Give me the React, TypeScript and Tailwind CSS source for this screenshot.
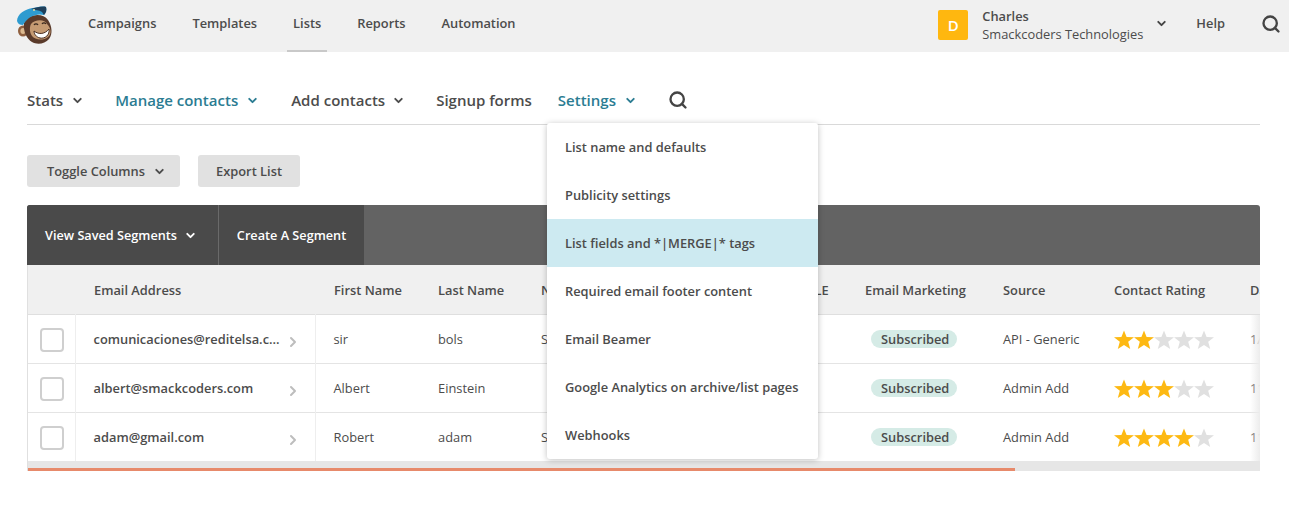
import { ChevronDown, ChevronRight, Search } from "lucide-react";

const navItems = ["Campaigns", "Templates", "Lists", "Reports", "Automation"];

const menuItems = [
  "List name and defaults",
  "Publicity settings",
  "List fields and *|MERGE|* tags",
  "Required email footer content",
  "Email Beamer",
  "Google Analytics on archive/list pages",
  "Webhooks",
];

const contacts = [
  { email: "comunicaciones@reditelsa.c...", first: "sir", last: "bols", company: "Smackcoders", source: "API - Generic", rating: 2, date: "1/12/2018" },
  { email: "albert@smackcoders.com", first: "Albert", last: "Einstein", company: "", source: "Admin Add", rating: 3, date: "11/12/2018" },
  { email: "adam@gmail.com", first: "Robert", last: "adam", company: "Smackcoders", source: "Admin Add", rating: 4, date: "11/12/2018" },
];

function Logo() {
  return (
    <svg width="38" height="40" viewBox="0 0 38 40" className="shrink-0">
      <ellipse cx="8" cy="25" rx="5" ry="5.5" fill="#8f6040" />
      <ellipse cx="8" cy="25" rx="2.600" ry="3" fill="#dcb98f" />
      <path d="M9 17C12 8 28 6 33 14c4 6 5 14 1 19-4 5-12 6-17 3C12 33 8 26 9 17z" fill="#5a3a2a" />
      <path d="M16 18c4-5 14-5 16 0 4 4 5 10 1 13-5 4-13 3-16-1-2-3-3-8-1-12z" fill="#c59a72" />
      <path d="M19 25c5 4 11 3 15-2 1 6-4 10-9 9-4-1-6-4-6-7z" fill="#fff" stroke="#4a2f22" strokeWidth="1" />
      <path d="M19 19c1-1.500 3-1.500 4 0M27 18c1-1.500 3-1.500 4 0" fill="none" stroke="#3b2a20" strokeWidth="1.300" />
      <path d="M2 15C2 8 10 3 18 2c5-1 10-2 13-1 1 3 0 6-2 8-7-2-16 1-21 10-3 0-5-1-6-4z" fill="#2e9bd0" />
      <path d="M16 3c6-2 12-3 15-2 1 3 0 6-2 8l-2-3c-3-2-7-2-11-3z" fill="#1f3f5a" />
      <circle cx="19" cy="4" r="1" fill="#e8dfa0" />
    </svg>
  );
}

function Star({ on }: { on: boolean }) {
  return (
    <svg width="20" height="20" viewBox="0 0 20 20">
      <path
        d="M10 .5l2.600 6.500 7.400.3-5.800 4.500 2 7.200-6.200-4-6.200 4 2-7.200L0 7.300l7.400-.3z"
        fill={on ? "#fdb913" : "#e0e0e0"}
      />
    </svg>
  );
}

function Chevron({ className }: { className?: string }) {
  return <ChevronDown size={13} strokeWidth={3.5} className={className} />;
}

export default function App() {
  return (
    <div className="h-[516px] w-[1289px] overflow-hidden bg-white font-['Open_Sans',sans-serif] text-[12.85px] text-[#4c4c4c]">
      <header className="flex h-[52px] items-center bg-[#f0f0f0] pl-[15px] pr-[8px]">
        <Logo />
        <nav className="ml-[35px] flex h-full gap-[36px]">
          {navItems.map((item) => (
            <a
              key={item}
              className={`flex h-full items-center border-b-2 pb-[2px] font-semibold ${
                item === "Lists" ? "border-[#c9c9c9] px-[6px] mx-[-6px]" : "border-transparent"
              }`}
            >
              {item}
            </a>
          ))}
        </nav>
        <div className="ml-auto flex items-center pb-[5px]">
          <div className="mt-[3px] flex size-[30px] items-center justify-center rounded-[2px] bg-[#ffb70f] text-[15px] font-semibold text-white">
            D
          </div>
          <div className="ml-[14px] mt-[3px] leading-[18px]">
            <div className="font-semibold">Charles</div>
            <div>Smackcoders Technologies</div>
          </div>
          <Chevron className="ml-[12px] text-[#444]" />
          <span className="ml-[28px] font-semibold">Help</span>
          <Search size={20} strokeWidth={2.8} className="ml-[36px] text-[#444]" />
        </div>
      </header>

      <div className="relative pl-[27px] pr-[29px]">
        <div className="flex h-[73px] items-center gap-[31px] border-b border-[#d9d9d9] pt-[24px] text-[15px] font-semibold">
          <span className="flex items-center gap-[8px]">Stats <Chevron /></span>
          <span className="flex items-center gap-[8px] text-[#2b7c92]">Manage contacts <Chevron /></span>
          <span className="ml-[1px] flex items-center gap-[7px]">Add contacts <Chevron /></span>
          <span>Signup forms</span>
          <span className="-ml-[5px] flex items-center gap-[8px] text-[#2b7c92]">Settings <Chevron /></span>
          <Search size={20} strokeWidth={2.8} className="text-[#444]" />
        </div>

        <div className="mt-[30px] flex gap-[18px] font-semibold">
          <button className="flex h-[32px] w-[153px] items-center gap-[8px] rounded-[3px] bg-[#e1e1e1] pl-[20px] pt-[1px]">
            Toggle Columns <Chevron />
          </button>
          <button className="h-[32px] w-[102px] rounded-[3px] bg-[#e1e1e1] pt-[1px]">Export List</button>
        </div>

        <div className="mt-[18px] flex h-[60px] overflow-hidden rounded-t-[3px] bg-[#636363] text-[12.7px] font-semibold text-white">
          <div className="flex w-[192px] items-center gap-[7px] border-r border-[#6a6a6a] bg-[#4a4a4a] pl-[18px] pt-[1px]">
            View Saved Segments <Chevron />
          </div>
          <div className="flex w-[145px] items-center justify-center bg-[#4a4a4a] pt-[1px]">Create A Segment</div>
        </div>

        <div className="relative overflow-hidden border-l border-[#e0e0e0]">
          <table className="-mb-[1px] w-[1300px] table-fixed border-collapse">
            <colgroup>
              <col className="w-[47px]" />
              <col className="w-[240px]" />
              <col className="w-[103px]" />
              <col className="w-[103px]" />
              <col className="w-[255px]" />
              <col className="w-[69px]" />
              <col className="w-[138px]" />
              <col className="w-[111px]" />
              <col className="w-[136px]" />
              <col className="w-[98px]" />
            </colgroup>
            <thead>
              <tr className="h-[49px] border-b border-[#dfdfdf] bg-[#f0f0f0] text-left">
                <th />
                <th className="pl-[19px] pt-[2px] font-semibold">Email Address</th>
                <th className="pl-[19px] pt-[2px] font-semibold">First Name</th>
                <th className="pl-[20px] pt-[2px] font-semibold">Last Name</th>
                <th className="pl-[20px] pt-[2px] font-semibold">Nickname</th>
                <th className="pl-[20px] pt-[2px] font-semibold">TITLE</th>
                <th className="pl-[20px] pt-[2px] font-semibold">Email Marketing</th>
                <th className="pl-[20px] pt-[2px] font-semibold">Source</th>
                <th className="pl-[20px] pt-[2px] font-semibold">Contact Rating</th>
                <th className="pl-[20px] pt-[2px] font-semibold">Date Added</th>
              </tr>
            </thead>
            <tbody>
              {contacts.map((c) => (
                <tr key={c.email} className="h-[49px] border-b border-[#e4e4e4] last:border-b-[#e6e6e6]">
                  <td className="border-r border-[#eeeeee] pl-[12px] pt-[2px]">
                    <div className="size-[24px] rounded-[4px] border-2 border-[#cfcfcf] bg-white" />
                  </td>
                  <td className="border-r border-[#eeeeee] pl-[18px] pt-[2px]">
                    <div className="flex items-center justify-between pr-[14px] font-semibold">
                      <span>{c.email}</span>
                      <ChevronRight size={16} strokeWidth={3} className="mt-[4px] text-[#bdbdbd]" />
                    </div>
                  </td>
                  <td className="pl-[18px] pt-[2px]">{c.first}</td>
                  <td className="pl-[20px] pt-[2px]">{c.last}</td>
                  <td className="pl-[20px] pt-[2px]">{c.company}</td>
                  <td />
                  <td className="pl-[26px] pt-[2px]">
                    <span className="inline-block h-[18px] rounded-full bg-[#d5ebe6] pl-[10px] pr-[8px] font-semibold leading-[18px]">
                      Subscribed
                    </span>
                  </td>
                  <td className="pl-[20px] pt-[2px]">{c.source}</td>
                  <td className="pl-[20px] pt-[2px]">
                    <div className="flex">
                      {[1, 2, 3, 4, 5].map((n) => (
                        <Star key={n} on={n <= c.rating} />
                      ))}
                    </div>
                  </td>
                  <td className="pl-[20px] pt-[2px]">{c.date}</td>
                </tr>
              ))}
            </tbody>
          </table>
          <div className="absolute bottom-0 right-0 top-[50px] w-[10px] bg-gradient-to-r from-transparent to-[#ececec]" />
          <div className="relative h-[10px] bg-[#e6e6e6] pt-[7px]">
            <div className="h-[3px] w-[987px] bg-[#e78a6b]" />
          </div>
        </div>

        <div className="absolute left-[547px] top-[71px] w-[271px] overflow-hidden rounded-[3px] bg-white font-semibold shadow-[0_1px_6px_rgba(0,0,0,0.25)]">
          {menuItems.map((item, i) => (
            <div key={item} className={`flex h-[48px] items-center pl-[18px] pt-[1px] ${i === 2 ? "bg-[#cdeaf1]" : ""}`}>
              {item}
            </div>
          ))}
        </div>
      </div>
    </div>
  );
}
